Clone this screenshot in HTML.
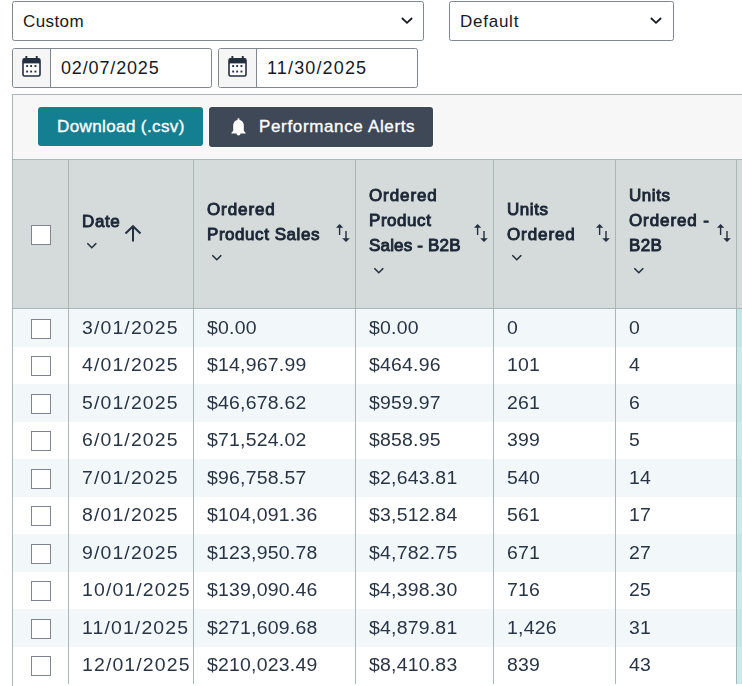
<!DOCTYPE html>
<html><head><meta charset="utf-8">
<style>
*{box-sizing:border-box;margin:0;padding:0}
html,body{width:742px;height:686px;overflow:hidden;background:#fff;font-family:"Liberation Sans",sans-serif;color:#16191f}
.abs{position:absolute}
.sel{position:absolute;border:1px solid #7f8791;border-radius:2.5px;background:#fff;height:40px}
.sel .t{position:absolute;left:10px;top:10px;font-size:17px;line-height:20px;white-space:nowrap}
.chev{position:absolute}
.din{position:absolute;top:48px;width:200px;height:40px;border:1px solid #7f8791;border-radius:2.5px;background:#fff;overflow:hidden}
.din .add{position:absolute;left:0;top:0;width:38px;height:38px;background:#f5f5f5;border-right:1px solid #7f8791}
.din .t{position:absolute;left:48px;top:9.4px;font-size:18px;line-height:20px;letter-spacing:0.85px;white-space:nowrap}
.din svg{position:absolute;left:9.3px;top:7px}
#frame{position:absolute;left:12px;top:94px;width:740px;height:66px;border-top:1px solid #aab7b8;background:#f7f7f7}
.btn{position:absolute;top:107px;height:40px;border-radius:3px;color:#fff;font-weight:normal;-webkit-text-stroke:0.35px #fff;font-size:17px;line-height:20px;letter-spacing:-0.1px;white-space:nowrap;box-shadow:0 0 0 1px #fff}
#hdr{position:absolute;left:12px;top:159px;width:740px;height:150px;background:#d5dbdb;border-top:1px solid #aab7b8;border-bottom:1px solid #aab7b8}
.vl{position:absolute;width:1px;background:#aab7b8}
.row{position:absolute;left:13px;width:740px}
.row.tl{left:737px;width:10px}
.cb{position:absolute;left:31px;width:20px;height:20px;border:1px solid #7f8590;background:#fff}
.ht{position:absolute;will-change:transform;font-weight:normal;-webkit-text-stroke:0.95px #1d2736;font-size:17px;line-height:25px;color:#1d2736;white-space:nowrap;letter-spacing:0.35px}
.cell{position:absolute;will-change:transform;transform:scaleX(1.08);transform-origin:0 0;font-size:18px;line-height:20px;color:#293544;white-space:nowrap;letter-spacing:0.2px}
.c0{letter-spacing:1.05px}
.ico{position:absolute}
.od{letter-spacing:0.6px}

</style></head>
<body>
<div class="sel" style="left:12px;top:1px;width:412px"><div class="t" style="letter-spacing:0.4px">Custom</div>
<svg class="chev" style="left:387.8px;top:15px" width="12" height="8" viewBox="0 0 12 8"><polyline points="0.9,1 6,5.9 11.1,1" fill="none" stroke="#16191f" stroke-width="1.75"/></svg></div>
<div class="sel" style="left:449px;top:1px;width:225px"><div class="t" style="letter-spacing:0.75px">Default</div>
<svg class="chev" style="left:200.4px;top:15px" width="12" height="8" viewBox="0 0 12 8"><polyline points="0.9,1 6,5.9 11.1,1" fill="none" stroke="#16191f" stroke-width="1.75"/></svg></div>
<div class="din" style="left:12px"><div class="add"></div>
<svg width="20" height="21" viewBox="0 0 20 21"><rect x="3.4" y="0" width="1.9" height="3" fill="#232f3e"/><rect x="13.8" y="0" width="1.9" height="3" fill="#232f3e"/><rect x="1" y="2.8" width="17" height="17.2" rx="1.6" fill="#fff" stroke="#232f3e" stroke-width="1.6"/><rect x="1" y="2.8" width="17" height="4.6" fill="#232f3e"/><g fill="#232f3e"><rect x="4.2" y="9.1" width="1.9" height="1.9"/><rect x="8.2" y="9.1" width="1.9" height="1.9"/><rect x="12.5" y="9.1" width="1.9" height="1.9"/><rect x="4.2" y="14.6" width="1.9" height="1.9"/><rect x="8.2" y="14.6" width="1.9" height="1.9"/><rect x="12.5" y="14.6" width="1.9" height="1.9"/></g></svg>
<div class="t">02/07/2025</div></div>
<div class="din" style="left:218px"><div class="add"></div>
<svg width="20" height="21" viewBox="0 0 20 21"><rect x="3.4" y="0" width="1.9" height="3" fill="#232f3e"/><rect x="13.8" y="0" width="1.9" height="3" fill="#232f3e"/><rect x="1" y="2.8" width="17" height="17.2" rx="1.6" fill="#fff" stroke="#232f3e" stroke-width="1.6"/><rect x="1" y="2.8" width="17" height="4.6" fill="#232f3e"/><g fill="#232f3e"><rect x="4.2" y="9.1" width="1.9" height="1.9"/><rect x="8.2" y="9.1" width="1.9" height="1.9"/><rect x="12.5" y="9.1" width="1.9" height="1.9"/><rect x="4.2" y="14.6" width="1.9" height="1.9"/><rect x="8.2" y="14.6" width="1.9" height="1.9"/><rect x="12.5" y="14.6" width="1.9" height="1.9"/></g></svg>
<div class="t" style="letter-spacing:1.15px">11/30/2025</div></div>
<div id="frame"></div>
<div class="btn" style="left:38px;width:165px;height:39px;background:#137f91"><span class="abs" style="left:19px;top:10px;letter-spacing:0.39px">Download (.csv)</span></div>
<div class="btn" style="left:209px;width:224px;background:#3e4856">
<svg class="abs" style="left:22px;top:11px" width="15" height="18" viewBox="0 0 15 18"><path d="M7.5 0.3c.7 0 1 .4 1 1v.7c2.4.5 4.3 2.3 4.3 5.2v5.6l1.9 2.3v.4H.3v-.4l1.9-2.3V7.2c0-2.9 1.9-4.7 4.3-5.2v-.7c0-.6.3-1 1-1zM5.5 15.6h4c0 1.1-.9 2-2 2s-2-.9-2-2z" fill="#fff"/></svg>
<span class="abs" style="left:50px;top:10px;letter-spacing:0.65px">Performance Alerts</span></div>
<div id="hdr"></div>

<div class="row" style="top:309.0px;height:37.5px;background:#f2f7f9"></div>
<div class="row tl" style="top:309.0px;height:37.5px;background:#c0e6e6"></div>
<div class="cb" style="top:319px"></div>
<div class="cell c0" style="left:82px;top:317.5px">3/01/2025</div>
<div class="cell c1" style="left:207px;top:317.5px">$0.00</div>
<div class="cell c2" style="left:369px;top:317.5px">$0.00</div>
<div class="cell c3" style="left:507px;top:317.5px">0</div>
<div class="cell c4" style="left:629px;top:317.5px">0</div>
<div class="row" style="top:346.5px;height:37.5px;background:#fff"></div>
<div class="row tl" style="top:346.5px;height:37.5px;background:#c8ecec"></div>
<div class="cb" style="top:356px"></div>
<div class="cell c0" style="left:82px;top:355.0px">4/01/2025</div>
<div class="cell c1" style="left:207px;top:355.0px">$14,967.99</div>
<div class="cell c2" style="left:369px;top:355.0px">$464.96</div>
<div class="cell c3" style="left:507px;top:355.0px">101</div>
<div class="cell c4" style="left:629px;top:355.0px">4</div>
<div class="row" style="top:384.0px;height:37.5px;background:#f2f7f9"></div>
<div class="row tl" style="top:384.0px;height:37.5px;background:#c0e6e6"></div>
<div class="cb" style="top:394px"></div>
<div class="cell c0" style="left:82px;top:392.5px">5/01/2025</div>
<div class="cell c1" style="left:207px;top:392.5px">$46,678.62</div>
<div class="cell c2" style="left:369px;top:392.5px">$959.97</div>
<div class="cell c3" style="left:507px;top:392.5px">261</div>
<div class="cell c4" style="left:629px;top:392.5px">6</div>
<div class="row" style="top:421.5px;height:37.5px;background:#fff"></div>
<div class="row tl" style="top:421.5px;height:37.5px;background:#c8ecec"></div>
<div class="cb" style="top:431px"></div>
<div class="cell c0" style="left:82px;top:430.0px">6/01/2025</div>
<div class="cell c1" style="left:207px;top:430.0px">$71,524.02</div>
<div class="cell c2" style="left:369px;top:430.0px">$858.95</div>
<div class="cell c3" style="left:507px;top:430.0px">399</div>
<div class="cell c4" style="left:629px;top:430.0px">5</div>
<div class="row" style="top:459.0px;height:37.5px;background:#f2f7f9"></div>
<div class="row tl" style="top:459.0px;height:37.5px;background:#c0e6e6"></div>
<div class="cb" style="top:469px"></div>
<div class="cell c0" style="left:82px;top:467.5px">7/01/2025</div>
<div class="cell c1" style="left:207px;top:467.5px">$96,758.57</div>
<div class="cell c2" style="left:369px;top:467.5px">$2,643.81</div>
<div class="cell c3" style="left:507px;top:467.5px">540</div>
<div class="cell c4" style="left:629px;top:467.5px">14</div>
<div class="row" style="top:496.5px;height:37.5px;background:#fff"></div>
<div class="row tl" style="top:496.5px;height:37.5px;background:#c8ecec"></div>
<div class="cb" style="top:506px"></div>
<div class="cell c0" style="left:82px;top:505.0px">8/01/2025</div>
<div class="cell c1" style="left:207px;top:505.0px">$104,091.36</div>
<div class="cell c2" style="left:369px;top:505.0px">$3,512.84</div>
<div class="cell c3" style="left:507px;top:505.0px">561</div>
<div class="cell c4" style="left:629px;top:505.0px">17</div>
<div class="row" style="top:534.0px;height:37.5px;background:#f2f7f9"></div>
<div class="row tl" style="top:534.0px;height:37.5px;background:#c0e6e6"></div>
<div class="cb" style="top:544px"></div>
<div class="cell c0" style="left:82px;top:542.5px">9/01/2025</div>
<div class="cell c1" style="left:207px;top:542.5px">$123,950.78</div>
<div class="cell c2" style="left:369px;top:542.5px">$4,782.75</div>
<div class="cell c3" style="left:507px;top:542.5px">671</div>
<div class="cell c4" style="left:629px;top:542.5px">27</div>
<div class="row" style="top:571.5px;height:37.5px;background:#fff"></div>
<div class="row tl" style="top:571.5px;height:37.5px;background:#c8ecec"></div>
<div class="cb" style="top:581px"></div>
<div class="cell c0" style="left:82px;top:580.0px">10/01/2025</div>
<div class="cell c1" style="left:207px;top:580.0px">$139,090.46</div>
<div class="cell c2" style="left:369px;top:580.0px">$4,398.30</div>
<div class="cell c3" style="left:507px;top:580.0px">716</div>
<div class="cell c4" style="left:629px;top:580.0px">25</div>
<div class="row" style="top:609.0px;height:37.5px;background:#f2f7f9"></div>
<div class="row tl" style="top:609.0px;height:37.5px;background:#c0e6e6"></div>
<div class="cb" style="top:619px"></div>
<div class="cell c0" style="left:82px;top:617.5px">11/01/2025</div>
<div class="cell c1" style="left:207px;top:617.5px">$271,609.68</div>
<div class="cell c2" style="left:369px;top:617.5px">$4,879.81</div>
<div class="cell c3" style="left:507px;top:617.5px">1,426</div>
<div class="cell c4" style="left:629px;top:617.5px">31</div>
<div class="row" style="top:646.5px;height:37.5px;background:#fff"></div>
<div class="row tl" style="top:646.5px;height:37.5px;background:#c8ecec"></div>
<div class="cb" style="top:656px"></div>
<div class="cell c0" style="left:82px;top:655.0px">12/01/2025</div>
<div class="cell c1" style="left:207px;top:655.0px">$210,023.49</div>
<div class="cell c2" style="left:369px;top:655.0px">$8,410.83</div>
<div class="cell c3" style="left:507px;top:655.0px">839</div>
<div class="cell c4" style="left:629px;top:655.0px">43</div>
<div class="vl" style="left:68px;top:159px;height:525px"></div>
<div class="vl" style="left:193px;top:159px;height:525px"></div>
<div class="vl" style="left:355px;top:159px;height:525px"></div>
<div class="vl" style="left:493px;top:159px;height:525px"></div>
<div class="vl" style="left:615px;top:159px;height:525px"></div>
<div class="vl" style="left:736px;top:159px;height:525px"></div>
<div class="vl" style="left:12px;top:94px;height:600px"></div>
<div class="cb" style="top:225px"></div>
<div class="ht" style="left:82px;top:208.5px;letter-spacing:0.6px">Date</div>
<div class="ht" style="left:207px;top:196.5px"><span style="letter-spacing:0.9px">Ordered</span><br><span style="letter-spacing:0.55px">Product Sales</span></div>
<div class="ht" style="left:369px;top:182.5px"><span style="letter-spacing:0.9px">Ordered</span><br><span style="letter-spacing:0.55px">Product</span><br><span style="letter-spacing:0.18px">Sales - B2B</span></div>
<div class="ht" style="left:507px;top:196.5px"><span style="letter-spacing:0.55px">Units</span><br><span style="letter-spacing:0.9px">Ordered</span></div>
<div class="ht" style="left:629px;top:182.5px"><span style="letter-spacing:0.55px">Units</span><br><span style="letter-spacing:0.9px">Ordered -</span><br><span style="letter-spacing:0.4px">B2B</span></div>
<svg class="ico" style="left:86.5px;top:242px" width="11" height="8" viewBox="0 0 11 8"><polyline points="0.3,1.2 4.8,5.7 9.3,1.2" fill="none" stroke="#232f3e" stroke-width="1.6"/></svg>
<svg class="ico" style="left:211.5px;top:254px" width="11" height="8" viewBox="0 0 11 8"><polyline points="0.3,1.2 4.8,5.7 9.3,1.2" fill="none" stroke="#232f3e" stroke-width="1.6"/></svg>
<svg class="ico" style="left:373.5px;top:267px" width="11" height="8" viewBox="0 0 11 8"><polyline points="0.3,1.2 4.8,5.7 9.3,1.2" fill="none" stroke="#232f3e" stroke-width="1.6"/></svg>
<svg class="ico" style="left:511.5px;top:254px" width="11" height="8" viewBox="0 0 11 8"><polyline points="0.3,1.2 4.8,5.7 9.3,1.2" fill="none" stroke="#232f3e" stroke-width="1.6"/></svg>
<svg class="ico" style="left:633.5px;top:267px" width="11" height="8" viewBox="0 0 11 8"><polyline points="0.3,1.2 4.8,5.7 9.3,1.2" fill="none" stroke="#232f3e" stroke-width="1.6"/></svg>
<svg class="ico" style="left:124px;top:225px" width="18" height="17" viewBox="0 0 18 17"><path d="M9 1.2V16.5M1.5 8.5L9 1.2L16.5 8.5" fill="none" stroke="#232f3e" stroke-width="2"/></svg>
<svg class="ico" style="left:336px;top:224px" width="14" height="18" viewBox="0 0 14 18"><path d="M0 3.7L3.6 0L7.3 3.7H4.3V11H2.9V3.7Z M9.3 7H10.7V14.2H13.8L10 18L6.2 14.2H9.3Z" fill="#232f3e"/></svg>
<svg class="ico" style="left:474px;top:224px" width="14" height="18" viewBox="0 0 14 18"><path d="M0 3.7L3.6 0L7.3 3.7H4.3V11H2.9V3.7Z M9.3 7H10.7V14.2H13.8L10 18L6.2 14.2H9.3Z" fill="#232f3e"/></svg>
<svg class="ico" style="left:596px;top:224px" width="14" height="18" viewBox="0 0 14 18"><path d="M0 3.7L3.6 0L7.3 3.7H4.3V11H2.9V3.7Z M9.3 7H10.7V14.2H13.8L10 18L6.2 14.2H9.3Z" fill="#232f3e"/></svg>
<svg class="ico" style="left:717px;top:224px" width="14" height="18" viewBox="0 0 14 18"><path d="M0 3.7L3.6 0L7.3 3.7H4.3V11H2.9V3.7Z M9.3 7H10.7V14.2H13.8L10 18L6.2 14.2H9.3Z" fill="#232f3e"/></svg>

</body></html>
